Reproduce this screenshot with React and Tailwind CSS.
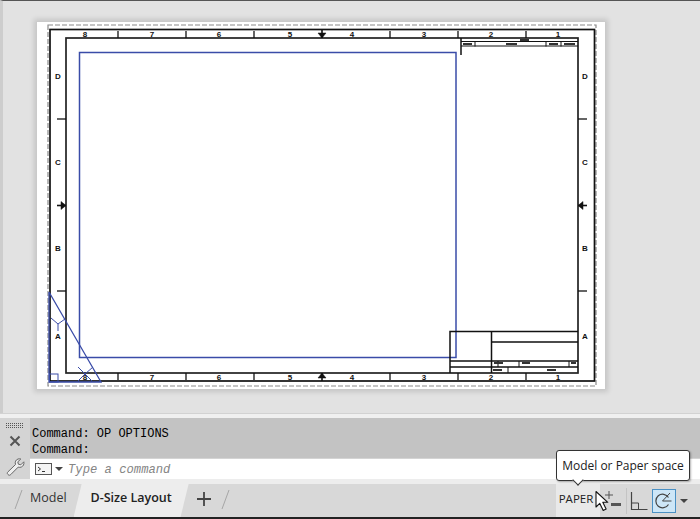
import React from 'react';

const sheetTicksX = [118, 186, 254, 390, 458, 526];
const sheetTicksY = [119, 291];
const colLabels = [['8', 85], ['7', 152], ['6', 219], ['5', 290], ['4', 352], ['3', 424], ['2', 491], ['1', 558]];
const rowLabels = [['D', 79], ['C', 165], ['B', 251], ['A', 339]];
const gripDots = [0, 1, 2, 3, 4, 5, 6, 7, 8];

// Layout sheet, drawn in page coordinates
const Sheet = () => (
  <svg width="568" height="367" viewBox="37 22 568 367" className="block">
    <rect x="48" y="25" width="548" height="361" fill="none" stroke="#8a8a8a" strokeWidth="1.2" strokeDasharray="5 2" />
    <rect x="50" y="29.500" width="544.500" height="351.500" fill="none" stroke="#111" strokeWidth="1.700" />
    <rect x="66" y="38" width="512" height="335" fill="none" stroke="#222" strokeWidth="1.700" />
    <rect x="79.500" y="52.500" width="376.500" height="305" fill="none" stroke="#3a4ca8" strokeWidth="1.500" />

    {sheetTicksX.map((x) => (
      <g key={x} stroke="#111" strokeWidth="1.300">
        <line x1={x} y1="31" x2={x} y2="38" />
        <line x1={x} y1="373" x2={x} y2="380" />
      </g>
    ))}
    {sheetTicksY.map((y) => (
      <g key={y} stroke="#111" strokeWidth="1.300">
        <line x1="57" y1={y} x2="66" y2={y} />
        <line x1="578" y1={y} x2="587" y2={y} />
      </g>
    ))}
    {/* centre marks */}
    <g stroke="#111" strokeWidth="1.600" fill="#111">
      <path d="M322 30v8" />
      <path d="M322 381v-8" />
      <path d="M57 205.500h9" />
      <path d="M587 205.500h-9" />
      <path d="M318 33h8l-4 5z" strokeWidth="0.500" />
      <path d="M318 378h8l-4-5z" strokeWidth="0.500" />
      <path d="M61 201.500v8l5-4z" strokeWidth="0.500" />
      <path d="M583 201.500v8l-5-4z" strokeWidth="0.500" />
    </g>
    {colLabels.map(([t, x]) => (
      <g key={t} fontFamily="Liberation Sans, sans-serif" fontWeight="700" fontSize="8" fill="#111" textAnchor="middle">
        <text x={x} y="36.500">{t}</text>
        <text x={x} y="380">{t}</text>
      </g>
    ))}
    {rowLabels.map(([t, y]) => (
      <g key={t} fontFamily="Liberation Sans, sans-serif" fontWeight="700" fontSize="8" fill="#111" textAnchor="middle">
        <text x="58" y={y}>{t}</text>
        <text x="585" y={y}>{t}</text>
      </g>
    ))}

    {/* revision strip, top right */}
    <g stroke="#111" fill="none">
      <path d="M461 38v17" strokeWidth="1.500" />
      <path d="M461 41.500h117M461 46h117" strokeWidth="1" />
      <path d="M475 41.500v5M546 41.500v5M561 41.500v5" strokeWidth="1" />
    </g>
    <g fill="#333">
      <rect x="520" y="39" width="9" height="2" />
      <rect x="463" y="43" width="9" height="2" />
      <rect x="506" y="43" width="11" height="2" />
      <rect x="549" y="43" width="9" height="2" />
      <rect x="564" y="43" width="11" height="2" />
    </g>

    {/* title block */}
    <g stroke="#111" fill="none" strokeWidth="1.500">
      <path d="M450 373v-41.500h128M491.500 331.500V373M491.500 342h86.500M450 361h128M450 367h128" />
      <path d="M498 361v6M519 361v6M569 361v6M508 367v6" strokeWidth="1" />
    </g>
    <g fill="#333">
      <rect x="494" y="362" width="9" height="2" />
      <rect x="522" y="362" width="8" height="2" />
      <rect x="571" y="362" width="5" height="2" />
      <rect x="493" y="369" width="9" height="2" />
      <rect x="547" y="369" width="9" height="2" />
    </g>

    {/* viewport corner symbol */}
    <g stroke="#3a4ca8" fill="none" strokeWidth="1">
      <path d="M49 292v90h52L49 292" strokeWidth="1.300" />
      <rect x="49.500" y="374" width="8.500" height="8" />
      <path d="M51 318l7 6 7-5M58 324v7" />
      <path d="M78 367l7 7 8-7M85 374l-7 7M85 374l7 7" />
    </g>
  </svg>
);

const Arrow = () => (
  <svg width="15" height="23" viewBox="0 0 15 23" className="absolute left-[594px] top-[490px]">
    <path d="M2 1.500v15.500l3.800-3.600 3.400 7 2.900-1.300-3.300-6.800h5z" fill="#fff" stroke="#111" strokeWidth="1.100" strokeLinejoin="round" />
  </svg>
);

export default function App() {
  return (
    <div
      className="relative w-[700px] h-[519px] overflow-hidden flex flex-col bg-[#e3e3e3]"
      style={{ fontFamily: '"Open Sans", "Liberation Sans", sans-serif' }}
    >
      {/* paper space */}
      <div className="h-[413px] pl-[34px] pt-[21px] bg-[#e2e2e2] border-l-[3px] border-t border-l-[#cdcdcd] border-t-[#555]">
        <div className="w-[568px] h-[367px] bg-white shadow-[0_0_5px_3px_rgba(0,0,0,0.13)]">
          <Sheet />
        </div>
      </div>
      <div className="h-[5px] bg-[#f0f0f0] border-t border-[#d2d2d2]" />

      {/* command line */}
      <div className="flex h-[61px] bg-[#d4d4d4]">
        <div className="w-[30px] flex flex-col items-center pt-[5px]">
          <svg width="18" height="5" viewBox="0 0 18 5" className="block">
            {gripDots.map((i) => (
              <g key={i} fill="#555">
                <rect x={i * 2} y="0" width="1" height="1" />
                <rect x={i * 2} y="2" width="1" height="1" />
                <rect x={i * 2} y="4" width="1" height="1" />
              </g>
            ))}
          </svg>
          <svg width="12" height="12" viewBox="0 0 12 12" className="mt-[7px]">
            <path d="M1.500 1.500l9 9M10.500 1.500l-9 9" stroke="#555" strokeWidth="2" />
          </svg>
          <svg width="19" height="19" viewBox="0 0 19 19" className="mt-[10px]">
            <path d="M2 17.500c-1-1-1-1.700 0-2.700l7.500-7.300c-.8-2.500.2-4.600 2.500-5.500 1-.3 2-.3 2.800 0l-3 2.800.6 2.400 2.400.6 3-3c.3 1 .2 2.200-.3 3.200-1 2-3.200 2.800-5.300 2.100l-7.400 7.400c-1 1-1.800 1-2.800 0z" fill="#eee" stroke="#666" strokeWidth="1" />
          </svg>
        </div>
        <div className="flex-1 flex flex-col">
          <div
            className="h-[40px] bg-[#c3c3c3] pl-[2px] pt-[8px] text-[12px] leading-[16px] text-black"
            style={{ fontFamily: '"Liberation Mono", monospace' }}
          >
            <div>Command: OP OPTIONS</div>
            <div>Command:</div>
          </div>
          <div className="h-[21px] mt-px bg-white flex items-center pl-[5px]">
            <svg width="17" height="12" viewBox="0 0 17 12">
              <rect x="0.500" y="0.500" width="16" height="11" fill="#f4f4f4" stroke="#555" />
              <path d="M3 4l2.500 2L3 8M7 8.500h3" stroke="#333" fill="none" />
            </svg>
            <svg width="8" height="4" viewBox="0 0 8 4" className="ml-[3px]">
              <path d="M0 0h8L4 4z" fill="#444" />
            </svg>
            <span
              className="ml-[5px] mt-[2px] text-[12.200px] italic text-[#858585]"
              style={{ fontFamily: '"Liberation Mono", monospace' }}
            >
              Type a command
            </span>
          </div>
        </div>
      </div>

      <div className="h-[5px] bg-[#ededed]" />

      {/* tabs and status bar */}
      <div className="h-[33px] bg-[#d8d8d8] flex items-center justify-between">
        <div className="flex items-center h-full">
          <svg width="30" height="33" viewBox="0 0 30 33">
            <path d="M22 6l-7 19" stroke="#a6a6a6" />
          </svg>
          <span className="text-[12.500px] text-[#333] mb-[4px]">Model</span>
          <div className="ml-[7px] h-full w-[115px] bg-[#ededed] flex items-center justify-center [clip-path:polygon(7%_0,100%_0,93%_100%,0_100%)]">
            <span className="text-[12.500px] font-semibold text-[#222] mb-[4px]">D-Size Layout</span>
          </div>
          <svg width="14" height="14" viewBox="0 0 14 14" className="ml-[8px] mb-[4px]">
            <path d="M7 0v14M0 7h14" stroke="#444" strokeWidth="1.800" />
          </svg>
          <svg width="12" height="33" viewBox="0 0 12 33" className="ml-[8px]">
            <path d="M10 6l-7 19" stroke="#a6a6a6" />
          </svg>
        </div>
        <div className="flex items-center h-full pr-[12px]">
          <div className="h-full w-[44px] pr-[4px] pb-[3px] bg-[#e9e9e9] flex items-center justify-center text-[11.500px] font-medium text-[#222]">PAPER</div>
          <svg width="26" height="24" viewBox="0 0 26 24">
            <path d="M9 2v8M5 6h8" stroke="#555" />
            <rect x="11" y="14" width="10" height="3" fill="#555" />
          </svg>
          <div className="w-px h-[26px] bg-[#c4c4c4] mr-[2px]" />
          <svg width="20" height="24" viewBox="0 0 20 24">
            <path d="M2.500 3v17.500h16" fill="none" stroke="#444" strokeWidth="1.200" />
            <path d="M2.500 14h7v6.500" fill="none" stroke="#444" />
          </svg>
          <div className="ml-[3px] w-[24px] h-[24px] bg-[#cde6f7] border border-[#4a90c4] flex items-center justify-center">
            <svg width="20" height="20" viewBox="0 0 20 20">
              <path d="M14.500 6.500A6.800 6.800 0 1 0 14.500 13.500" fill="none" stroke="#444" strokeWidth="1.200" />
              <path d="M8.500 10h9M8.500 10l7.500-8" stroke="#444" fill="none" />
            </svg>
          </div>
          <svg width="8" height="4" viewBox="0 0 8 4" className="ml-[4px]">
            <path d="M0 0h8L4 4z" fill="#444" />
          </svg>
        </div>
      </div>
      <div className="h-[2px] bg-[#222]" />

      {/* tooltip */}
      <div className="absolute left-[556px] top-[450px] w-[134px] h-[31px] bg-white border border-[#333] rounded-[3px] flex items-center justify-center text-[12px] font-medium text-[#222] shadow-[1px_1px_2px_rgba(0,0,0,0.3)]">
        Model or Paper space
        <div className="absolute left-[17px] top-[25px] w-[8px] h-[8px] rotate-45 bg-white border-r border-b border-[#333]" />
      </div>
      <Arrow />
    </div>
  );
}
